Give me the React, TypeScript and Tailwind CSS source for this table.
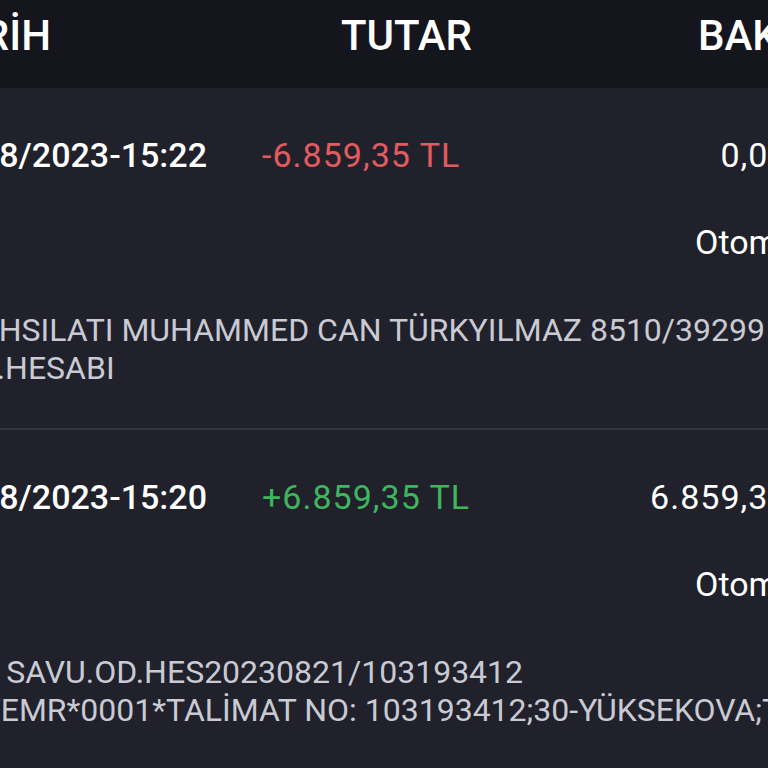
const rows = [
  {
    date: "21/08/2023-15:22",
    amount: "-6.859,35 TL",
    positive: false,
    balance: "0,00 TL",
    desc: [
      "TAHSILATI MUHAMMED CAN TÜRKYILMAZ 8510/39299 AİDAT",
      "LD.HESABI",
    ],
  },
  {
    date: "21/08/2023-15:20",
    amount: "+6.859,35 TL",
    positive: true,
    balance: "6.859,35 TL",
    desc: [
      "LD SAVU.OD.HES20230821/103193412",
      "OTEMR*0001*TALİMAT NO: 103193412;30-YÜKSEKOVA;TL",
    ],
  },
];

export default function App() {
  return (
    <div className="h-[768px] w-[768px] overflow-hidden bg-[#20212b] font-['Roboto',sans-serif] text-white">
      {/* column header */}
      <div className="flex h-[88px] items-start bg-[#15151d] pt-[15px] text-[42px] font-medium leading-none">
        <div className="flex w-[51px] shrink-0 justify-end">
          <span className="shrink-0 whitespace-nowrap">TARİH</span>
        </div>
        <div className="w-[647px] shrink-0 pl-[290px]">TUTAR</div>
        <div className="shrink-0 whitespace-nowrap">BAKİYE</div>
      </div>

      {rows.map((r) => (
        <div
          key={r.date}
          className="border-b-2 border-[#33343f] pt-[50px] pb-[41px]"
        >
          <div className="flex w-[838px] text-[34px] leading-none">
            <div className="flex w-[207px] shrink-0 justify-end font-medium">
              <span className="shrink-0 whitespace-nowrap">{r.date}</span>
            </div>
            <div
              className={`ml-[55px] w-[250px] shrink-0 whitespace-nowrap tracking-[0.03em] ${r.positive ? "text-[#3fb55e]" : "text-[#e25b60]"}`}
            >
              {r.amount}
            </div>
            <div className="flex flex-1 justify-end whitespace-nowrap tracking-[0.03em]">
              {r.balance}
            </div>
          </div>
          <div className="mt-[53px] whitespace-nowrap pl-[695px] text-[34px] leading-none">
            Otomatik
          </div>
          <div className="mt-[52px] -ml-[40px] text-[32px] leading-[38px] text-[#c9cad3]">
            {r.desc.map((line) => (
              <div key={line} className="whitespace-nowrap">
                {line}
              </div>
            ))}
          </div>
        </div>
      ))}
    </div>
  );
}
